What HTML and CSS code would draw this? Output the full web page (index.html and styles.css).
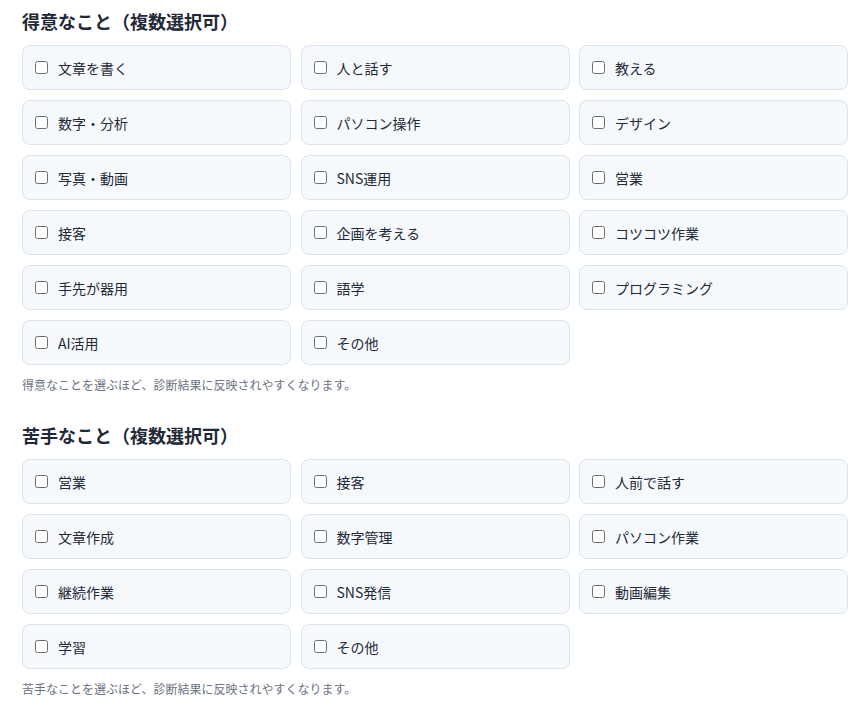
FILE: index.html
```html
<!DOCTYPE html>
<html lang="ja">
<head>
<meta charset="utf-8">
<link rel="stylesheet" href="styles.css">
</head>
<body>
<div class="page">
  <section class="group">
    <h2 class="title">得意なこと（複数選択可）</h2>
    <div class="grid">
      <label class="opt"><input type="checkbox" class="box"><span>文章を書く</span></label>
      <label class="opt"><input type="checkbox" class="box"><span>人と話す</span></label>
      <label class="opt"><input type="checkbox" class="box"><span>教える</span></label>
      <label class="opt"><input type="checkbox" class="box"><span>数字・分析</span></label>
      <label class="opt"><input type="checkbox" class="box"><span>パソコン操作</span></label>
      <label class="opt"><input type="checkbox" class="box"><span>デザイン</span></label>
      <label class="opt"><input type="checkbox" class="box"><span>写真・動画</span></label>
      <label class="opt"><input type="checkbox" class="box"><span>SNS運用</span></label>
      <label class="opt"><input type="checkbox" class="box"><span>営業</span></label>
      <label class="opt"><input type="checkbox" class="box"><span>接客</span></label>
      <label class="opt"><input type="checkbox" class="box"><span>企画を考える</span></label>
      <label class="opt"><input type="checkbox" class="box"><span>コツコツ作業</span></label>
      <label class="opt"><input type="checkbox" class="box"><span>手先が器用</span></label>
      <label class="opt"><input type="checkbox" class="box"><span>語学</span></label>
      <label class="opt"><input type="checkbox" class="box"><span>プログラミング</span></label>
      <label class="opt"><input type="checkbox" class="box"><span>AI活用</span></label>
      <label class="opt"><input type="checkbox" class="box"><span>その他</span></label>
    </div>
    <p class="hint">得意なことを選ぶほど、診断結果に反映されやすくなります。</p>
  </section>
  <section class="group second">
    <h2 class="title">苦手なこと（複数選択可）</h2>
    <div class="grid">
      <label class="opt"><input type="checkbox" class="box"><span>営業</span></label>
      <label class="opt"><input type="checkbox" class="box"><span>接客</span></label>
      <label class="opt"><input type="checkbox" class="box"><span>人前で話す</span></label>
      <label class="opt"><input type="checkbox" class="box"><span>文章作成</span></label>
      <label class="opt"><input type="checkbox" class="box"><span>数字管理</span></label>
      <label class="opt"><input type="checkbox" class="box"><span>パソコン作業</span></label>
      <label class="opt"><input type="checkbox" class="box"><span>継続作業</span></label>
      <label class="opt"><input type="checkbox" class="box"><span>SNS発信</span></label>
      <label class="opt"><input type="checkbox" class="box"><span>動画編集</span></label>
      <label class="opt"><input type="checkbox" class="box"><span>学習</span></label>
      <label class="opt"><input type="checkbox" class="box"><span>その他</span></label>
    </div>
    <p class="hint">苦手なことを選ぶほど、診断結果に反映されやすくなります。</p>
  </section>
</div>
</body>
</html>
```
FILE: styles.css
```css
* { box-sizing: border-box; }
body {
  margin: 0;
  background: #ffffff;
  font-family: "Noto Sans CJK JP", "Noto Sans", sans-serif;
  color: #1f2937;
}
.page {
  padding: 9px 16px 0 22px;
}
.group { margin: 0; }
.second { margin-top: 29px; }
.title {
  margin: 0 0 11px;
  font-size: 18px;
  line-height: 25px;
  font-weight: 700;
  color: #1f2937;
}
.grid {
  display: grid;
  grid-template-columns: repeat(3, 1fr);
  column-gap: 9.5px;
  row-gap: 10px;
}
.opt {
  display: flex;
  align-items: center;
  gap: 10px;
  height: 45px;
  padding: 0 12px;
  border: 1px solid #dbe3ed;
  border-radius: 8px;
  background: #f6f9fc;
  font-size: 14px;
  color: #1f2937;
  cursor: pointer;
}
.box {
  appearance: none;
  -webkit-appearance: none;
  margin: 0;
  width: 13px;
  height: 13px;
  border: 1px solid #6f6f6f;
  border-radius: 2.5px;
  background: #ffffff;
  flex: none;
}
.hint {
  margin: 11px 0 0;
  font-size: 12px;
  line-height: 18px;
  color: #6b7280;
}
```
